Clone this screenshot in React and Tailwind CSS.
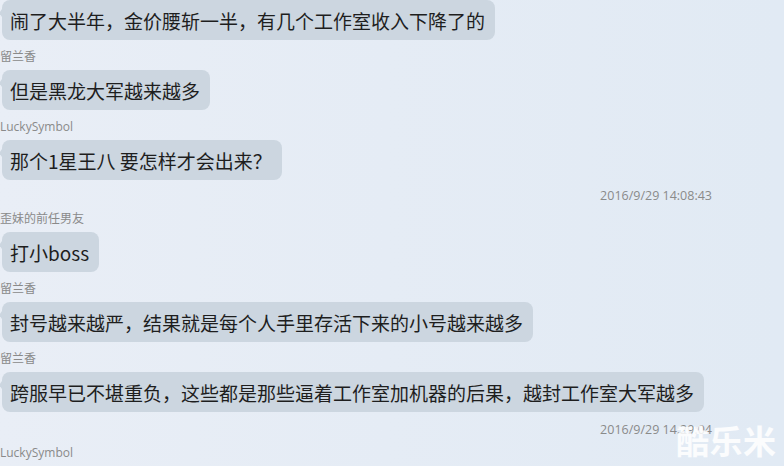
import React from "react";

const cjk = { fontFamily: '"Noto Sans CJK SC", "Noto Sans", sans-serif' };
const latin = { fontFamily: '"Open Sans", "Noto Sans CJK SC", sans-serif' };

const Bubble = ({ children }) => (
  <div className="relative ml-[2px] flex h-10 w-fit items-center rounded-lg bg-[#ccd6e0] pl-2 pr-[10px] text-[19px] text-[#1e1e1e]">
    {/* little tail on the left */}
    <span className="absolute -left-[3px] top-[9px] h-0 w-0 border-y-[4px] border-r-[3px] border-y-transparent border-r-[#ccd6e0]" />
    <span className="whitespace-nowrap leading-none" style={cjk}>
      {children}
    </span>
  </div>
);

const Name = ({ children, top = 10 }) => (
  <div
    className={`h-[14px] text-[12px] leading-[14px] text-[#8a8a8a] ${top === 10 ? "mt-[10px]" : "mt-[9px]"} mb-[6px]`}
    style={latin}
  >
    {children}
  </div>
);

const Stamp = ({ children, top }) => (
  <div
    className={`h-[14px] w-[712px] text-right text-[12.5px] leading-[14px] text-[#8a8a8a] ${top === 11 ? "mt-[11px]" : "mt-[9px]"}`}
    style={latin}
  >
    {children}
  </div>
);

export default function App() {
  return (
    <div className="relative h-[466px] w-[784px] overflow-hidden bg-gradient-to-r from-[#e9eef6] to-[#e1eaf4]">
      <div className="flex flex-col">
        <Bubble>闹了大半年，金价腰斩一半，有几个工作室收入下降了的</Bubble>
        <Name>留兰香</Name>
        <Bubble>但是黑龙大军越来越多</Bubble>
        <Name>LuckySymbol</Name>
        <Bubble>那个1星王八 要怎样才会出来？</Bubble>
        <Stamp>2016/9/29 14:08:43</Stamp>
        <Name top={9}>歪妹的前任男友</Name>
        <Bubble>打小boss</Bubble>
        <Name>留兰香</Name>
        <Bubble>封号越来越严，结果就是每个人手里存活下来的小号越来越多</Bubble>
        <Name>留兰香</Name>
        <Bubble>跨服早已不堪重负，这些都是那些逼着工作室加机器的后果，越封工作室大军越多</Bubble>
        <Stamp top={11}>2016/9/29 14:29:04</Stamp>
        <Name top={9}>LuckySymbol</Name>
        {/* next message, only its top edge is in view */}
        <div className="ml-[2px] h-10 w-[250px] rounded-lg bg-[#ccd6e0]" />
      </div>
      <div
        className="absolute left-[676px] top-[424px] text-[33px] font-bold leading-none tracking-[0.5px] text-white/85"
        style={cjk}
      >
        酷乐米
      </div>
    </div>
  );
}
